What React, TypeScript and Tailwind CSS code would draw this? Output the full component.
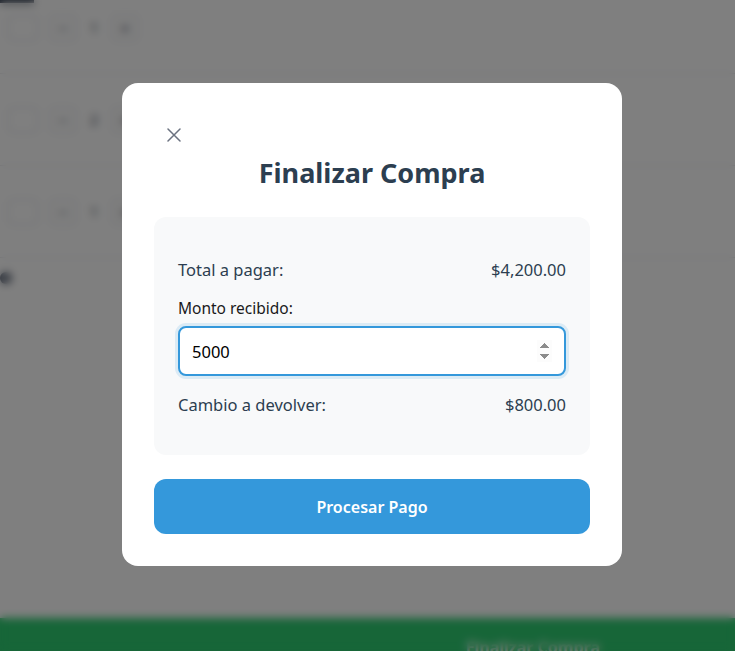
import { useState } from 'react';

const cart = [
  { id: 1, qty: 1 },
  { id: 2, qty: 2 },
  { id: 3, qty: 1 },
];

function CartRow({ qty }: { qty: number }) {
  return (
    <div className="flex h-[92px] items-center gap-3 border-b border-gray-200 pl-2">
      <div className="h-[26px] w-[30px] rounded border border-gray-300" />
      <div className="flex h-[26px] w-[26px] items-center justify-center rounded border border-gray-300 text-lg text-gray-700">
        −
      </div>
      <span className="w-3 text-center text-sm text-gray-700">{qty}</span>
      <div className="flex h-[26px] w-[26px] items-center justify-center rounded border border-gray-300 text-lg text-gray-700">
        +
      </div>
    </div>
  );
}

export default function App() {
  const [amount, setAmount] = useState('5000');
  const total = 4200;
  const change = Number(amount) - total;

  return (
    <div className="relative h-[651px] overflow-hidden bg-white font-['Noto_Sans',sans-serif]">
      {/* page behind the dialog */}
      <div className="flex h-full flex-col">
        <div className="h-[3px] w-[34px] bg-gray-700" />
        <div className="flex-1">
          <div className="-mt-[21px]">
            {cart.map((item) => (
              <CartRow key={item.id} qty={item.qty} />
            ))}
          </div>
          <div className="mt-[14px] h-3 w-3 rounded-full bg-gray-500" />
        </div>
        <div className="flex h-[33px] justify-end bg-[#2ecc71] pr-[135px] pt-[19px] text-[16px] font-bold leading-[20px] text-white/80">
          Finalizar Compra
        </div>
      </div>

      {/* dialog */}
      <div className="fixed inset-0 flex items-center justify-center bg-black/50 backdrop-blur-[4px]">
        <div className="-mt-[2px] ml-[9px] w-[500px] rounded-2xl bg-white px-8 pb-8 pt-8">
          <button
            type="button"
            aria-label="Cerrar"
            className="ml-2 mt-2 flex h-6 w-6 items-center justify-center text-[#6b7280]"
          >
            <svg width="14" height="14" viewBox="0 0 14 14" fill="none" stroke="currentColor" strokeWidth="1.5" strokeLinecap="round">
              <path d="M1 1l12 12M13 1L1 13" />
            </svg>
          </button>
          <h2 className="mt-[10px] text-center text-[27px] font-bold leading-[32px] text-[#2c3e50]">
            Finalizar Compra
          </h2>

          <div className="mt-[28px] rounded-xl bg-[#f8f9fa] px-6 pb-[38px] pt-[41px]">
            <div className="flex justify-between text-[16.5px] leading-6 text-[#2c3e50]">
              <span>Total a pagar:</span>
              <span>${total.toLocaleString('en-US', { minimumFractionDigits: 2 })}</span>
            </div>
            <label className="mt-[15px] block text-[15.5px] leading-[22px] text-[#1a1a1a]">
              Monto recibido:
            </label>
            <input
              type="number"
              autoFocus
              value={amount}
              onChange={(e) => setAmount(e.target.value)}
              className="mt-[7px] block h-[50px] w-full rounded-lg border-2 border-[#3498db] bg-white px-3 text-[16.5px] text-black shadow-[0_0_0_3px_rgba(52,152,219,0.15)] outline-none"
            />
            <div className="mt-[17px] flex justify-between text-[16.5px] leading-6 text-[#2c3e50]">
              <span>Cambio a devolver:</span>
              <span>${change.toLocaleString('en-US', { minimumFractionDigits: 2 })}</span>
            </div>
          </div>

          <button
            type="button"
            className="mt-6 flex h-[55px] w-full items-center justify-center rounded-xl bg-[#3498db] text-[16px] font-semibold text-white"
          >
            Procesar Pago
          </button>
        </div>
      </div>
    </div>
  );
}
